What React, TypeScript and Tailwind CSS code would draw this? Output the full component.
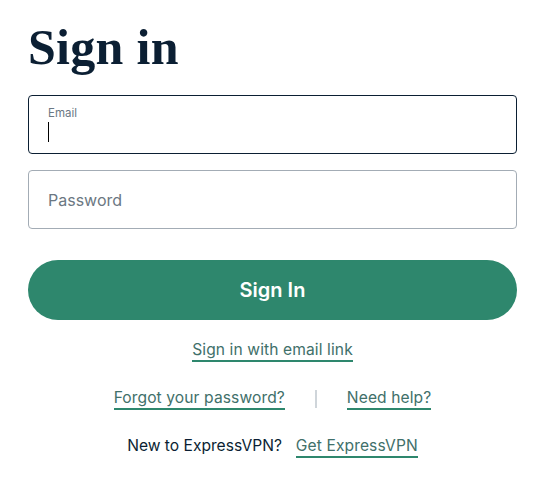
import React from 'react';

const sans = "font-['Inter','Noto_Sans',sans-serif]";

function UnderlineLink({ children }: { children: React.ReactNode }) {
  return (
    <a
      href="#"
      className="inline-block border-b-2 border-[#2e876d] text-[15.6px] leading-[20px] text-[#41706a] tracking-[0.1px]"
    >
      {children}
    </a>
  );
}

export default function App() {
  return (
    <div className={`bg-white w-[545px] h-[492px] px-[28px] pt-[17px] ${sans}`}>
      <h1 className="font-['Liberation_Serif','Times_New_Roman',serif] font-bold text-[50px] leading-[60px] text-[#0b1f33] tracking-[0.3px]">
        Sign in
      </h1>

      {/* Email field (focused) */}
      <div className="mt-[18px] h-[59px] rounded-[4px] border border-[#0b1f33] px-[19px] pt-[11px] flex flex-col">
        <span className="text-[11.5px] leading-[13px] text-[#6b7884]">Email</span>
        <span className="mt-[2px] w-px h-[20px] bg-black" />
      </div>

      {/* Password field */}
      <div className="mt-[16px] h-[59px] rounded-[4px] border border-[#a3acb5] px-[19px] flex items-center">
        <span className="text-[16px] text-[#6b7782]">Password</span>
      </div>

      <button className="mt-[31px] w-full h-[60px] rounded-full bg-[#2e876d] text-white text-[20px] font-semibold">
        Sign In
      </button>

      <div className="mt-[20px] flex justify-center">
        <UnderlineLink>Sign in with email link</UnderlineLink>
      </div>

      <div className="mt-[26px] flex justify-center items-center gap-[30px]">
        <UnderlineLink>Forgot your password?</UnderlineLink>
        <span className="w-[2px] h-[18px] bg-[#cfd5da]" />
        <UnderlineLink>Need help?</UnderlineLink>
      </div>

      <div className="mt-[26px] flex justify-center items-start gap-[14px]">
        <span className="text-[15.6px] leading-[20px] text-[#0b1f33]">New to ExpressVPN?</span>
        <UnderlineLink>Get ExpressVPN</UnderlineLink>
      </div>
    </div>
  );
}
